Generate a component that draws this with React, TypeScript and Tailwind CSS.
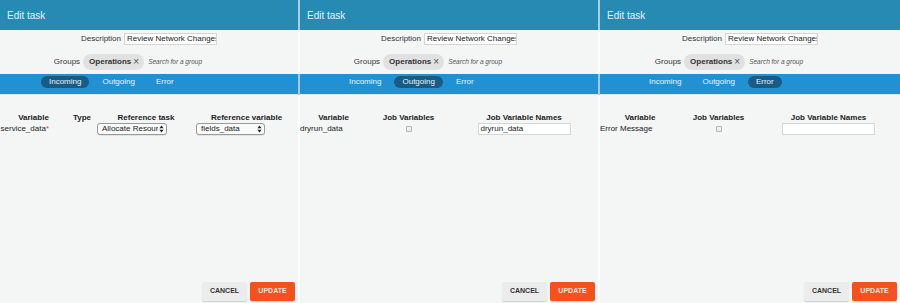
import React from "react";

type Tab = "Incoming" | "Outgoing" | "Error";

const TABS: Tab[] = ["Incoming", "Outgoing", "Error"];

function UpDown() {
	return (
		<svg width="5" height="8" viewBox="0 0 5 8" className="shrink-0">
			<path d="M2.5 0.5 L4.6 3.2 H0.4 Z" fill="#222" />
			<path d="M2.5 7.5 L4.6 4.8 H0.4 Z" fill="#222" />
		</svg>
	);
}

function Select({ value, width }: { value: string; width: string }) {
	return (
		<div
			className={`${width} h-[12px] flex items-center justify-between rounded-[3px] border border-[#9a9a9a] bg-[#fafafa] pl-[4px] pr-[2px] text-[8px] leading-none text-[#222] shadow-[0_0.5px_0.5px_rgba(0,0,0,0.15)]`}
		>
			<span className="whitespace-nowrap overflow-hidden">{value}</span>
			<UpDown />
		</div>
	);
}

function Checkbox() {
	return (
		<div className="w-[6px] h-[6px] rounded-[1px] border border-[#b5b5b5] bg-[#eeeeee]" />
	);
}

function TextBox({ value }: { value?: string }) {
	return (
		<div className="w-[93px] h-[12px] flex items-center border border-[#d6d6d6] bg-white px-[2px] text-[8px] leading-none text-[#222] whitespace-nowrap overflow-hidden">
			{value}
		</div>
	);
}

function IncomingTable() {
	return (
		<div className="text-[8px] text-[#222]">
			<div className="flex leading-[9px] font-bold">
				<div className="w-[67px] text-center">Variable</div>
				<div className="w-[30px] text-center">Type</div>
				<div className="w-[98px] text-center">Reference task</div>
				<div className="w-[103px] text-center">Reference variable</div>
			</div>
			<div className="flex items-center h-[12px] mt-[1px]">
				<div className="w-[49px] flex justify-end">
					<span className="shrink-0 whitespace-nowrap">
						service_data<span className="text-[#e53935]">*</span>
					</span>
				</div>
				<div className="w-[48px]" />
				<div className="w-[99px]">
					<Select value="Allocate Resour" width="w-[70px]" />
				</div>
				<div>
					<Select value="fields_data" width="w-[69px]" />
				</div>
			</div>
		</div>
	);
}

function JobTable({
	name,
	value,
	cols,
}: {
	name: string;
	value?: string;
	cols: [string, string, string];
}) {
	return (
		<div className="text-[8px] text-[#222]">
			<div className="flex leading-[9px] font-bold">
				<div className={`${cols[0]} text-center`}>Variable</div>
				<div className={`${cols[1]} text-center`}>Job Variables</div>
				<div className={`${cols[2]} text-center`}>Job Variable Names</div>
			</div>
			<div className="flex items-center h-[12px] mt-[1px]">
				<div className={`${cols[0]} whitespace-nowrap`}>{name}</div>
				<div className={`${cols[1]} flex justify-center`}>
					<Checkbox />
				</div>
				<div className={`${cols[2]} flex justify-center`}>
					<TextBox value={value} />
				</div>
			</div>
		</div>
	);
}

function Panel({ active, last }: { active: Tab; last?: boolean }) {
	return (
		<div className="w-[300px] h-[303px] flex shrink-0">
			<div className="flex-1 flex flex-col min-w-0">
				<div className="h-[30px] bg-[#278ab3] flex items-center pl-[7px] text-[10px] text-[#e3f1f7]">
					Edit task
				</div>
				<div className="flex-1 flex flex-col bg-[#f4f6f6]">
					<div className="pt-[3px] pb-[4px]">
						<div className="flex justify-center items-center gap-[3px] h-[12px]">
							<span className="text-[8px] text-[#333]">Description</span>
							<TextBox value="Review Network Changes" />
						</div>
						<div className="flex justify-center items-center h-[16px] mt-[9px]">
							<span className="text-[8px] text-[#333]">Groups</span>
							<div className="ml-[3px] h-[16px] flex items-center rounded-full bg-[#e1e1e1] pl-[6px] pr-[5px] text-[8px] text-[#333]">
								<span className="font-bold">Operations</span>
								<span className="ml-[2px] text-[10px] leading-none text-[#555]">×</span>
							</div>
							<div className="ml-[4px] w-[96px] text-[6.5px] italic text-[#555] whitespace-nowrap">
								Search for a group
							</div>
						</div>
					</div>
					<div className="h-[21px] bg-[#2191d3] border-b border-[#dbe9f1] flex items-start pt-[2px] pl-[41px] gap-[5px]">
						{TABS.map((t) => (
							<div
								key={t}
								className={`h-[12px] flex items-center px-[8px] rounded-full text-[8px] text-[#e8f3fb] ${
									t === active ? "bg-[#185b85]" : ""
								}`}
							>
								{t}
							</div>
						))}
					</div>
					<div className="mt-[18px]">
						{active === "Incoming" && <IncomingTable />}
						{active === "Outgoing" && (
							<JobTable
								name="dryrun_data"
								value="dryrun_data"
								cols={["w-[67px]", "w-[83px]", "w-[148px]"]}
							/>
						)}
						{active === "Error" && (
							<JobTable
								name="Error Message"
								cols={["w-[80px]", "w-[77px]", "w-[143px]"]}
							/>
						)}
					</div>
					<div className="flex-1" />
					<div className="flex justify-end gap-[3px] pr-[3px] pb-[2px]">
						<div className="w-[45px] h-[19px] flex items-center justify-center rounded-[2px] bg-[#ececec] shadow-[0_1px_1px_rgba(0,0,0,0.15)] text-[7px] font-bold text-[#333]">
							CANCEL
						</div>
						<div className="w-[45px] h-[19px] flex items-center justify-center rounded-[2px] bg-[#f4511e] shadow-[0_1px_1px_rgba(0,0,0,0.15)] text-[7px] font-bold text-[#fde3da]">
							UPDATE
						</div>
					</div>
				</div>
			</div>
			{!last && (
				<div className="w-[2px] flex flex-col">
					<div className="h-[30px] bg-[#a8d0e0]" />
					<div className="h-[44px] bg-[#fbfcfc]" />
					<div className="h-[21px] bg-[#a0cdec]" />
					<div className="flex-1 bg-[#fbfcfc]" />
				</div>
			)}
		</div>
	);
}

export default function App() {
	return (
		<div className="w-[900px] h-[303px] flex overflow-hidden font-['Liberation_Sans',Arial,sans-serif]">
			<Panel active="Incoming" />
			<Panel active="Outgoing" />
			<Panel active="Error" last />
		</div>
	);
}
